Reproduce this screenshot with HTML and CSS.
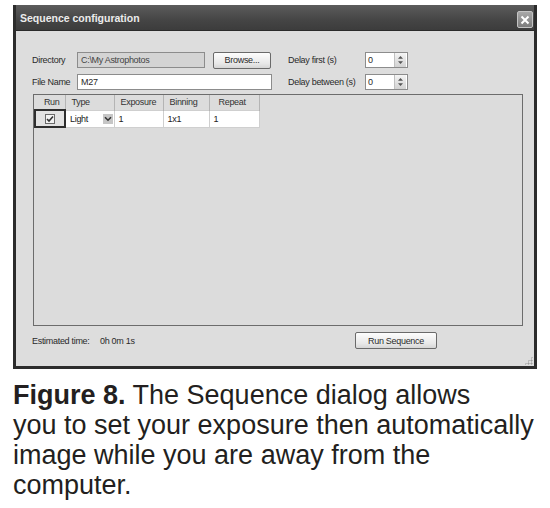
FILE: index.html
```html
<!DOCTYPE html>
<html lang="en">
<head>
  <meta charset="UTF-8">
  <title>Sequence configuration</title>
  <link rel="stylesheet" href="styles.css">
</head>
<body>
  <div class="figure">
    <div class="window">
      <div class="titlebar">
        <span class="title">Sequence configuration</span>
        <button class="close">
          <svg width="10" height="10" viewBox="0 0 10 10"><path d="M1.5 1.5 L8.5 8.5 M8.5 1.5 L1.5 8.5" stroke="#fff" stroke-width="2"/></svg>
        </button>
      </div>

      <div class="client">
        <div class="form">
          <label>Directory</label>
          <div class="field disabled dir">C:\My Astrophotos</div>
          <button class="btn browse">Browse...</button>
          <label>Delay first (s)</label>
          <div class="spin">
            <span>0</span>
            <span class="arrows">
              <svg width="7" height="10" viewBox="0 0 7 10"><path d="M3.5 1 L6 3.8 L1 3.8 Z M3.5 9 L6 6.2 L1 6.2 Z" fill="#555"/></svg>
            </span>
          </div>

          <label>File Name</label>
          <div class="field name">M27</div>
          <label>Delay between (s)</label>
          <div class="spin">
            <span>0</span>
            <span class="arrows">
              <svg width="7" height="10" viewBox="0 0 7 10"><path d="M3.5 1 L6 3.8 L1 3.8 Z M3.5 9 L6 6.2 L1 6.2 Z" fill="#555"/></svg>
            </span>
          </div>
        </div>

        <div class="grid">
          <table>
            <thead>
              <tr>
                <th class="c-run">Run</th>
                <th class="c-type">Type</th>
                <th class="c-exp">Exposure</th>
                <th class="c-bin">Binning</th>
                <th class="c-rep">Repeat</th>
              </tr>
            </thead>
            <tbody>
              <tr>
                <td class="c-run focus">
                  <span class="check">
                    <svg width="8" height="8" viewBox="0 0 8 8"><path d="M1 4 L3 6 L7 1.5" fill="none" stroke="#333" stroke-width="1.6"/></svg>
                  </span>
                </td>
                <td class="c-type">
                  <div class="combo">
                    <span>Light</span>
                    <span class="drop">
                      <svg width="8" height="6" viewBox="0 0 8 6"><path d="M1 1.2 L4 4.2 L7 1.2" fill="none" stroke="#333" stroke-width="1.6"/></svg>
                    </span>
                  </div>
                </td>
                <td>1</td>
                <td>1x1</td>
                <td>1</td>
              </tr>
            </tbody>
          </table>
        </div>

        <div class="status">
          <span>Estimated time:</span>
          <span>0h 0m 1s</span>
          <button class="btn run">Run Sequence</button>
        </div>

        <div class="grip"></div>
      </div>
    </div>

    <p class="caption"><b>Figure 8.</b> The Sequence dialog allows<br>you to set your exposure then automatically<br>image while you are away from the<br>computer.</p>
  </div>
</body>
</html>
```

FILE: styles.css
```css
body {
  margin: 0;
  background: #ffffff;
  font-family: "Liberation Sans", Arial, sans-serif;
}

.figure {
  padding: 5px 0 0 13px;
}

/* dialog window */
.window {
  width: 524px;
  height: 364px;
  box-sizing: border-box;
  border: 3px solid #2c2c2c;
  border-top: 0;
  background: #dddddd;
  display: flex;
  flex-direction: column;
}

.titlebar {
  height: 26px;
  flex: none;
  display: flex;
  align-items: center;
  padding: 0 1px 0 4px;
  background: linear-gradient(#5c5c5c, #454545 60%, #3c3c3c);
  border-bottom: 1px solid #2a2a2a;
  box-sizing: border-box;
}

.title {
  flex: 1;
  color: #ececec;
  font-size: 10.5px;
  font-weight: bold;
}

.close {
  width: 16px;
  height: 17px;
  align-self: flex-end;
  margin-bottom: 2px;
  padding: 0;
  border: 1px solid #c4c4c4;
  border-radius: 2px;
  background: linear-gradient(#a8a8a8, #7c7c7c);
  display: flex;
  align-items: center;
  justify-content: center;
}

.client {
  flex: 1;
  position: relative;
  padding: 21px 11px 0 16px;
  font-size: 9px;
  letter-spacing: -0.3px;
  color: #2a2a2a;
}

/* top form */
.form {
  display: grid;
  grid-template-columns: 45px 136px 75px 77px 43px;
  grid-auto-rows: 16px;
  row-gap: 6px;
  align-items: center;
}

.field {
  height: 16px;
  box-sizing: border-box;
  border: 1px solid #8c8c8c;
  background: #ffffff;
  padding-left: 3px;
  line-height: 14px;
}

.field.disabled {
  background: #d4d4d4;
  color: #444;
}

.dir {
  width: 128px;
}

.name {
  grid-column: 2 / 4;
  width: 195px;
}

.btn {
  height: 17px;
  padding: 0;
  box-sizing: border-box;
  border: 1px solid #6a6a6a;
  border-radius: 2px;
  background: linear-gradient(#fdfdfd, #e8e8e8 70%, #d6d6d6);
  font-family: inherit;
  font-size: 9px;
  letter-spacing: -0.3px;
  color: #2a2a2a;
}

.browse {
  width: 58px;
}

.spin {
  width: 43px;
  height: 16px;
  box-sizing: border-box;
  border: 1px solid #8c8c8c;
  background: #ffffff;
  display: flex;
  align-items: center;
  justify-content: space-between;
  padding-left: 2px;
}

.spin .arrows {
  width: 11px;
  height: 14px;
  margin-right: 1px;
  background: linear-gradient(#f4f4f4, #d2d2d2);
  border-left: 1px solid #c0c0c0;
  display: flex;
  align-items: center;
  justify-content: center;
}

/* sequence grid */
.grid {
  margin: 4px 0 0 1px;
  width: 490px;
  height: 232px;
  box-sizing: border-box;
  border: 1px solid #6c6c6c;
  background: #dcdcdc;
}

table {
  border-collapse: collapse;
  table-layout: fixed;
  width: 224px;
}

th, td {
  box-sizing: border-box;
}

th {
  height: 15px;
  padding: 0 0 0 6px;
  font-weight: normal;
  text-align: left;
  border-right: 1px solid #b4b4b4;
  color: #333;
}

th.c-run {
  text-align: right;
  padding: 0 5px 0 0;
}

th.c-rep {
  padding-left: 9px;
}

.c-run { width: 30px; }
.c-type { width: 49px; }
.c-exp { width: 49px; }
.c-bin { width: 46px; }
.c-rep { width: 50px; }

td {
  height: 17px;
  padding: 0 0 0 4px;
  background: #ffffff;
  border: 1px solid #cfcfcf;
  color: #222;
}

td.focus {
  padding: 0;
  background: #e2e2e2;
  border: 2px solid #2e2e2e;
  text-align: center;
}

.check {
  display: inline-flex;
  width: 10px;
  height: 10px;
  box-sizing: border-box;
  border: 1px solid #6a6a6a;
  background: #f2f2f2;
  align-items: center;
  justify-content: center;
  vertical-align: middle;
}

.combo {
  display: flex;
  align-items: center;
  justify-content: space-between;
}

.drop {
  width: 10px;
  height: 10px;
  margin-right: 1px;
  background: #c6c6c6;
  display: flex;
  align-items: center;
  justify-content: center;
}

/* bottom row */
.status {
  margin-top: 6px;
  display: grid;
  grid-template-columns: 68px 255px 82px;
  align-items: center;
}

.run {
  width: 82px;
}

.grip {
  position: absolute;
  right: 1px;
  bottom: 1px;
  width: 9px;
  height: 9px;
  background: radial-gradient(circle, #a0a0a0 45%, transparent 50%) 0 0 / 3px 3px;
  clip-path: polygon(100% 0, 100% 100%, 0 100%);
}

/* caption */
.caption {
  margin: 11px 0 0;
  font-size: 27px;
  line-height: 30px;
  color: #231f20;
}

.caption b {
  font-weight: 900;
}
```
